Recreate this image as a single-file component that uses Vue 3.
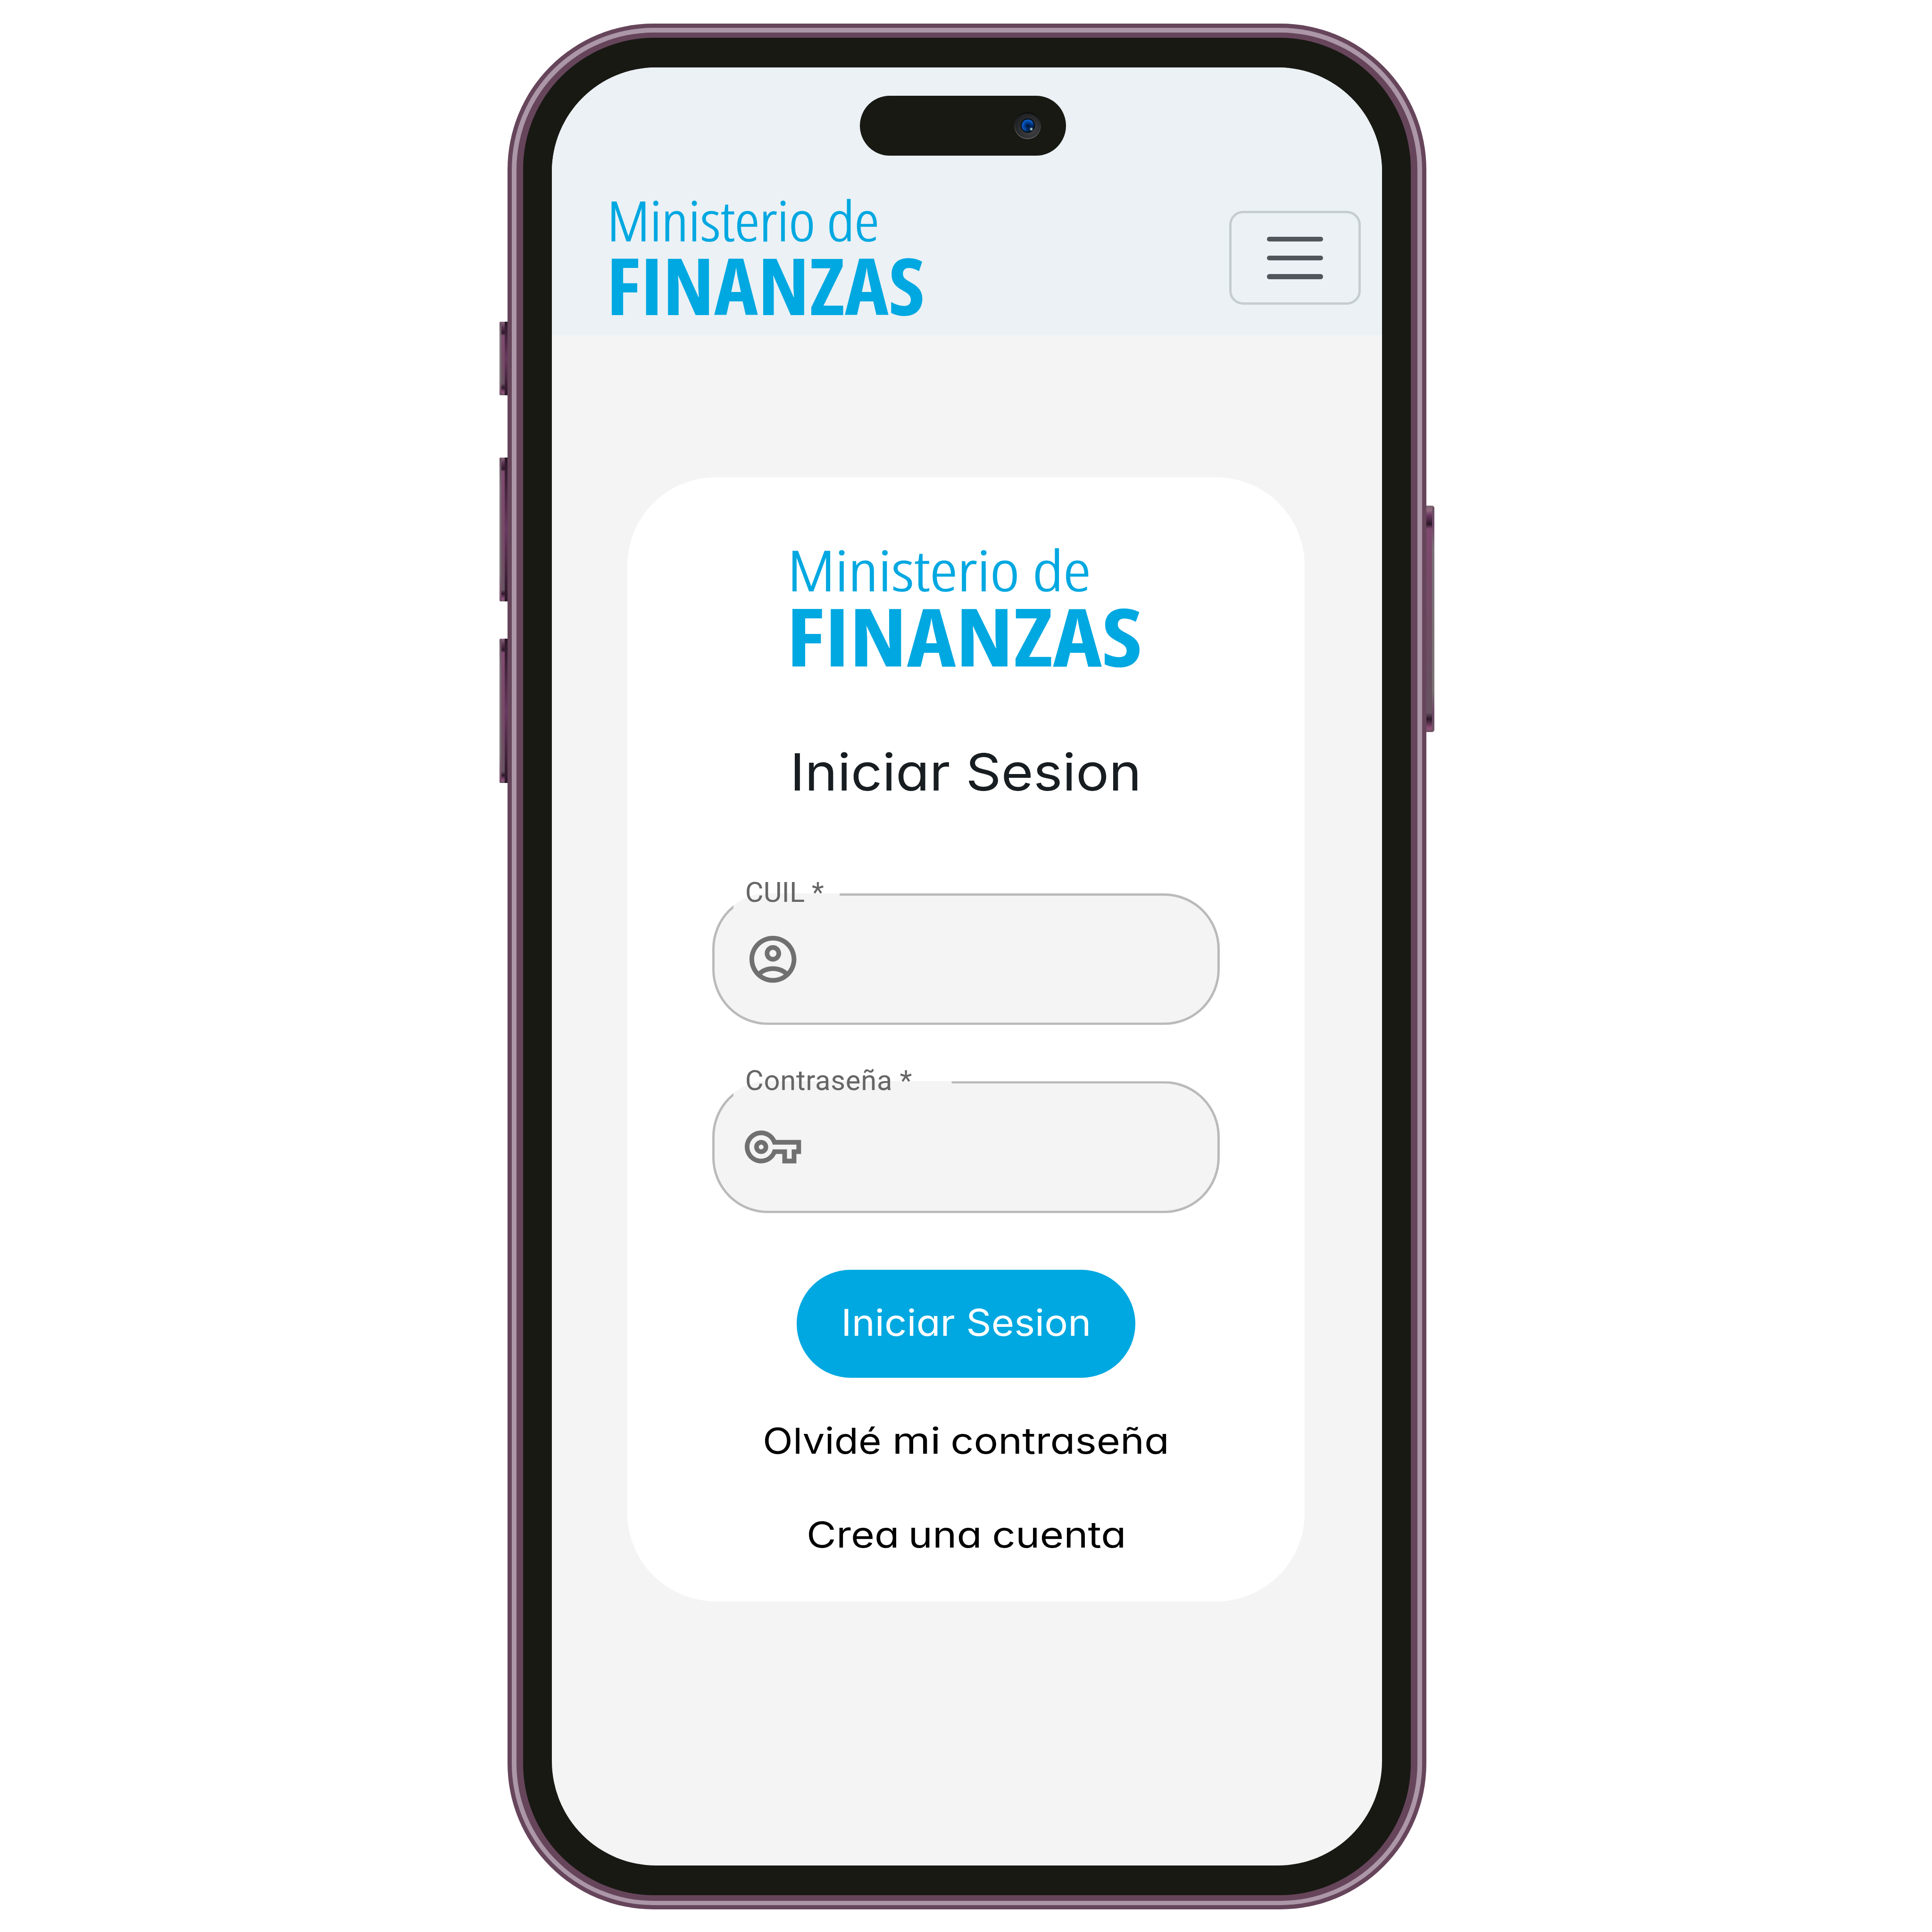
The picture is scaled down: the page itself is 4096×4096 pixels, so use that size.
<script setup>
const sideButtons = [
  { id: 'mute', side: 'left', top: 7.72, height: 1.9 },
  { id: 'volume-up', side: 'left', top: 11.23, height: 3.73 },
  { id: 'volume-down', side: 'left', top: 15.92, height: 3.73 },
  { id: 'power', side: 'right', top: 12.47, height: 5.87 },
]

const fields = [
  {
    id: 'cuil',
    label: 'CUIL *',
    labelWidth: 199,
    notchEnd: '3.3rem',
    icon: 'M12 2C6.48 2 2 6.48 2 12s4.48 10 10 10 10-4.48 10-10S17.52 2 12 2zM7.35 18.5C8.66 17.56 10.26 17 12 17s3.34.56 4.65 1.5c-1.31.94-2.91 1.5-4.65 1.5s-3.34-.56-4.65-1.5zm10.79-1.38C16.45 15.8 14.32 15 12 15s-4.45.8-6.14 2.12C4.7 15.73 4 13.95 4 12c0-4.42 3.58-8 8-8s8 3.58 8 8c0 1.95-.7 3.73-1.86 5.12zM12 6c-1.93 0-3.5 1.57-3.5 3.5S10.07 13 12 13s3.5-1.57 3.5-3.5S13.93 6 12 6zm0 5c-.83 0-1.5-.67-1.5-1.5S11.17 8 12 8s1.5.67 1.5 1.5S12.83 11 12 11z',
  },
  {
    id: 'password',
    label: 'Contraseña *',
    labelWidth: 427,
    notchEnd: '6.2rem',
    icon: 'M22 19h-6v-4h-2.68c-1.14 2.42-3.6 4-6.32 4-3.86 0-7-3.14-7-7s3.14-7 7-7c2.72 0 5.17 1.58 6.32 4H24v6h-2v4zm-4-2h2v-4h2v-2H11.94l-.23-.67C11.01 8.34 9.11 7 7 7c-2.76 0-5 2.24-5 5s2.24 5 5 5c2.11 0 4.01-1.34 4.71-3.33l.23-.67H18v4zM7 15c-1.65 0-3-1.35-3-3s1.35-3 3-3 3 1.35 3 3-1.35 3-3 3zm0-4c-.55 0-1 .45-1 1s.45 1 1 1 1-.45 1-1-.45-1-1-1z',
  },
]

const links = [
  {
    id: 'forgot',
    width: 1040,
    words: [
      { text: 'Olvidé', x: -6, length: 307 },
      { text: 'mi', x: 329, length: 126 },
      { text: 'contraseña', x: 480, length: 566 },
    ],
  },
  {
    id: 'create',
    width: 814,
    words: [
      { text: 'Crea', x: -6, length: 240 },
      { text: 'una', x: 257, length: 191 },
      { text: 'cuenta', x: 474, length: 347 },
    ],
  },
]
</script>

<template>
  <main class="stage">
    <div class="phone">
      <span
        v-for="b in sideButtons"
        :key="b.id"
        class="side"
        :class="b.side"
        :style="{ top: b.top + 'rem', height: b.height + 'rem' }"
      ></span>

      <div class="ring outer"><div class="ring light"><div class="ring inner"><div class="bezel">
        <div class="screen">
          <div class="island">
            <svg class="camera" viewBox="0 0 70 70">
              <defs>
                <linearGradient id="rim" x1="0" y1="0" x2="0" y2="1">
                  <stop offset="0" stop-color="#000" />
                  <stop offset=".5" stop-color="#333436" />
                  <stop offset="1" stop-color="#6c6c6e" />
                </linearGradient>
                <radialGradient id="barrel" cx=".6" cy=".65" r=".6">
                  <stop offset="0" stop-color="#454648" />
                  <stop offset="1" stop-color="#222326" />
                </radialGradient>
                <radialGradient id="lens" cx=".5" cy=".52" r=".55">
                  <stop offset="0" stop-color="#00102c" />
                  <stop offset=".45" stop-color="#003a8c" />
                  <stop offset="1" stop-color="#0a6be0" />
                </radialGradient>
                <linearGradient id="shade" x1="0" y1="0" x2="1" y2="1">
                  <stop offset=".5" stop-color="#000c20" stop-opacity="0" />
                  <stop offset=".8" stop-color="#000c20" stop-opacity=".85" />
                </linearGradient>
              </defs>
              <circle cx="35" cy="35" r="34.5" fill="url(#rim)" />
              <circle cx="35" cy="35" r="32.5" fill="url(#barrel)" />
              <circle cx="35.5" cy="34.5" r="18.5" fill="#060a10" />
              <circle cx="35.5" cy="34.5" r="16" fill="url(#lens)" />
              <circle cx="35.5" cy="34.5" r="16.2" fill="url(#shade)" />
              <circle cx="44.5" cy="43.5" r="4.5" fill="#5b8f98" opacity=".6" />
              <circle cx="44.5" cy="43.5" r="2.4" fill="#c4dfe0" />
            </svg>
          </div>

          <header class="topbar">
            <svg class="brand" viewBox="0 0 820 310">
              <text class="brand-light" x="-7" y="113.7" font-size="141.5" textLength="704" lengthAdjust="spacingAndGlyphs">Ministerio de</text>
              <text class="brand-bold" x="-9" y="305" font-size="204.5" textLength="824" lengthAdjust="spacingAndGlyphs">FINANZAS</text>
            </svg>
            <button class="menu" aria-label="Menu">
              <i></i><i></i><i></i>
            </button>
          </header>

          <section class="card">
            <svg class="logo" viewBox="0 0 903 310">
              <text class="brand-light" x="-10" y="110" font-size="144" textLength="785" lengthAdjust="spacingAndGlyphs">Ministerio de</text>
              <text class="brand-bold" x="-13" y="305.6" font-size="207.5" textLength="921" lengthAdjust="spacingAndGlyphs">FINANZAS</text>
            </svg>

            <svg class="title" viewBox="0 0 890 120">
              <text class="geo" x="-10" y="110" font-size="133" textLength="910" lengthAdjust="spacingAndGlyphs">Iniciar Sesion</text>
            </svg>

            <div v-for="f in fields" :key="f.id" class="field">
              <div class="outline" :style="{ '--notch-end': f.notchEnd }"></div>
              <svg class="label" :viewBox="`0 0 ${f.labelWidth} 60`" :style="{ width: f.labelWidth / 100 + 'rem' }">
                <text x="-4" y="56" font-size="73" :textLength="f.labelWidth + 5">{{ f.label }}</text>
              </svg>
              <svg class="icon" viewBox="0 0 24 24"><path :d="f.icon" /></svg>
            </div>

            <button class="submit">
              <svg viewBox="0 0 632 80">
                <text class="geo" x="-7" y="74" font-size="95" textLength="647" lengthAdjust="spacingAndGlyphs">Iniciar Sesion</text>
              </svg>
            </button>

            <a v-for="l in links" :key="l.id" class="link" :class="l.id">
              <svg :viewBox="`0 0 ${l.width} 80`" :style="{ width: l.width / 100 + 'rem' }">
                <text
                  v-for="w in l.words"
                  :key="w.text"
                  class="geo"
                  :x="w.x"
                  y="74"
                  font-size="93"
                  :textLength="w.length"
                  lengthAdjust="spacingAndGlyphs"
                >{{ w.text }}</text>
              </svg>
            </a>
          </section>
        </div>
      </div></div></div></div>
    </div>
  </main>
</template>

<style>
html {
  font-size: 81.92px;
}
body {
  background: #fff;
}
</style>

<style scoped>
* {
  box-sizing: border-box;
}
.stage {
  width: 50rem;
  height: 50rem;
  padding: 0.61rem 0 0 13.13rem;
  overflow: hidden;
  background: #fff;
}
.phone {
  position: relative;
  width: 23.79rem;
  height: 48.81rem;
}
.ring,
.bezel {
  width: 100%;
  height: 100%;
}
.outer {
  padding: 0.11rem;
  border-radius: 3.78rem;
  background: #66455b;
}
.light {
  padding: 0.12rem 0.125rem;
  border-radius: 3.67rem;
  background: #ac97a8;
}
.inner {
  padding: 0.14rem 0.17rem;
  border-radius: 3.55rem;
  background: #66455b;
}
.bezel {
  padding: 0.77rem 0.75rem;
  border-radius: 3.4rem;
  background: #181913;
}
.screen {
  position: relative;
  display: flex;
  flex-direction: column;
  align-items: center;
  width: 100%;
  height: 100%;
  overflow: hidden;
  border-radius: 2.7rem;
  background: #f4f4f4;
}

.side {
  position: absolute;
  width: 0.21rem;
}
.side::before,
.side::after {
  content: '';
  position: absolute;
}
.left {
  left: -0.2rem;
  border-radius: 0.04rem 0 0 0.04rem;
  background: linear-gradient(#2b1727, #6a3860 50%, #2b1727);
}
.left::before {
  inset: 0 0.08rem 0 0;
  border-radius: 0.04rem 0 0 0.04rem;
  background: linear-gradient(#8c6a80, #5a3350 0.15rem, #2f1829 0.3rem, #7f4a70 0.36rem, #764a66 50%, #695263 calc(100% - 0.3rem), #2f1829 calc(100% - 0.2rem), #8c4f7b calc(100% - 0.08rem), #6a5a62);
}
.left::after {
  inset: 0.03rem auto 0.03rem 0;
  width: 0.045rem;
  background: linear-gradient(#6b5263, #7c7078 20%, #7b7376 80%, #7a4c6c);
}
.right {
  right: -0.2rem;
  border-radius: 0 0.06rem 0.06rem 0;
  background: linear-gradient(#7b6270, #93687f 0.12rem, #6a3860 0.25rem, #2b1727 0.48rem, #7f4a70 0.6rem, #774a68 30%, #695060 75%, #675262 calc(100% - 0.5rem), #2b1727 calc(100% - 0.34rem), #8f5078 calc(100% - 0.1rem), #6d525f);
}
.right::after {
  inset: 0.04rem 0 0.04rem auto;
  width: 0.06rem;
  border-radius: 0 0.04rem 0.04rem 0;
  background: linear-gradient(#6b5565, #70496a 8%, #7c7078 18%, #7b7376 82%, #70496a 92%, #6b5a64);
}

.island {
  position: absolute;
  top: 0.725rem;
  left: 7.965rem;
  display: flex;
  align-items: center;
  justify-content: flex-end;
  width: 5.34rem;
  height: 1.55rem;
  padding-right: 0.64rem;
  border-radius: 0.775rem;
  background: #181913;
}
.camera {
  width: 0.7rem;
  height: 0.7rem;
}

.topbar {
  display: flex;
  flex: none;
  justify-content: space-between;
  align-items: flex-start;
  width: 100%;
  height: 6.93rem;
  padding: 3.35rem 0.55rem 0 1.505rem;
  background: #ebf1f5;
}
svg {
  display: block;
  overflow: visible;
}
.brand {
  width: 8.2rem;
  height: 3.1rem;
}
.brand-light,
.brand-bold {
  fill: #00a8e1;
  font-family: 'Open Sans', 'Noto Sans', sans-serif;
  font-stretch: 80%;
}
.brand-light {
  font-weight: 300;
  stroke: #00a8e1;
  stroke-width: 1.8;
}
.brand-bold {
  font-weight: 700;
}
.menu {
  display: flex;
  flex-direction: column;
  align-items: center;
  justify-content: center;
  gap: 0.36rem;
  width: 3.4rem;
  height: 2.43rem;
  margin-top: 0.36rem;
  padding: 0;
  border: 0.0615rem solid #c5cdd0;
  border-radius: 0.36rem;
  background: transparent;
}
.menu i {
  width: 1.46rem;
  height: 0.126rem;
  border-radius: 0.063rem;
  background: #51565c;
}

.card {
  display: flex;
  flex: none;
  flex-direction: column;
  align-items: center;
  width: 17.52rem;
  height: 29.09rem;
  margin: 3.67rem 0.05rem 0 0;
  padding-top: 1.845rem;
  border-radius: 2.29rem;
  background: #fff;
}
.logo {
  width: 9.03rem;
  height: 3.1rem;
}
.title {
  width: 8.9rem;
  height: 1.2rem;
  margin: 2.06rem 0 2.56rem;
}
.geo {
  font-family: Inter, 'Open Sans', sans-serif;
  font-weight: 400;
  font-feature-settings: 'cv11' 1;
}
.title .geo {
  fill: #171d21;
}

.field {
  position: relative;
  display: flex;
  flex: none;
  align-items: center;
  width: 13.14rem;
  height: 3.41rem;
  padding-left: 0.85rem;
  border-radius: 1.44rem;
  background: #f4f4f4;
}
.field + .field {
  margin-top: 1.46rem;
}
.outline {
  position: absolute;
  inset: 0;
  border: 0.0615rem solid #bababa;
  border-radius: inherit;
  clip-path: polygon(0 0, 0.55rem 0, 0.55rem 0.5rem, var(--notch-end) 0.5rem, var(--notch-end) 0, 100% 0, 100% 100%, 0 100%);
}
.label {
  position: absolute;
  top: -0.34rem;
  left: 0.89rem;
  height: 0.6rem;
  fill: #666;
  font-family: Roboto, sans-serif;
}
.icon {
  width: 1.457rem;
  height: 1.457rem;
  fill: #707070;
}

.submit {
  display: flex;
  flex: none;
  align-items: center;
  justify-content: center;
  width: 8.76rem;
  height: 2.8rem;
  margin-top: 1.465rem;
  padding: 0;
  border: 0;
  border-radius: 1.4rem;
  background: #00a8e1;
}
.submit svg {
  width: 6.32rem;
  height: 0.8rem;
  margin-top: -0.07rem;
  fill: #fff;
}
.link {
  display: block;
  fill: #000;
}
.link svg {
  height: 0.8rem;
}
.forgot {
  margin-top: 1.215rem;
}
.create {
  margin-top: 1.63rem;
}
</style>
